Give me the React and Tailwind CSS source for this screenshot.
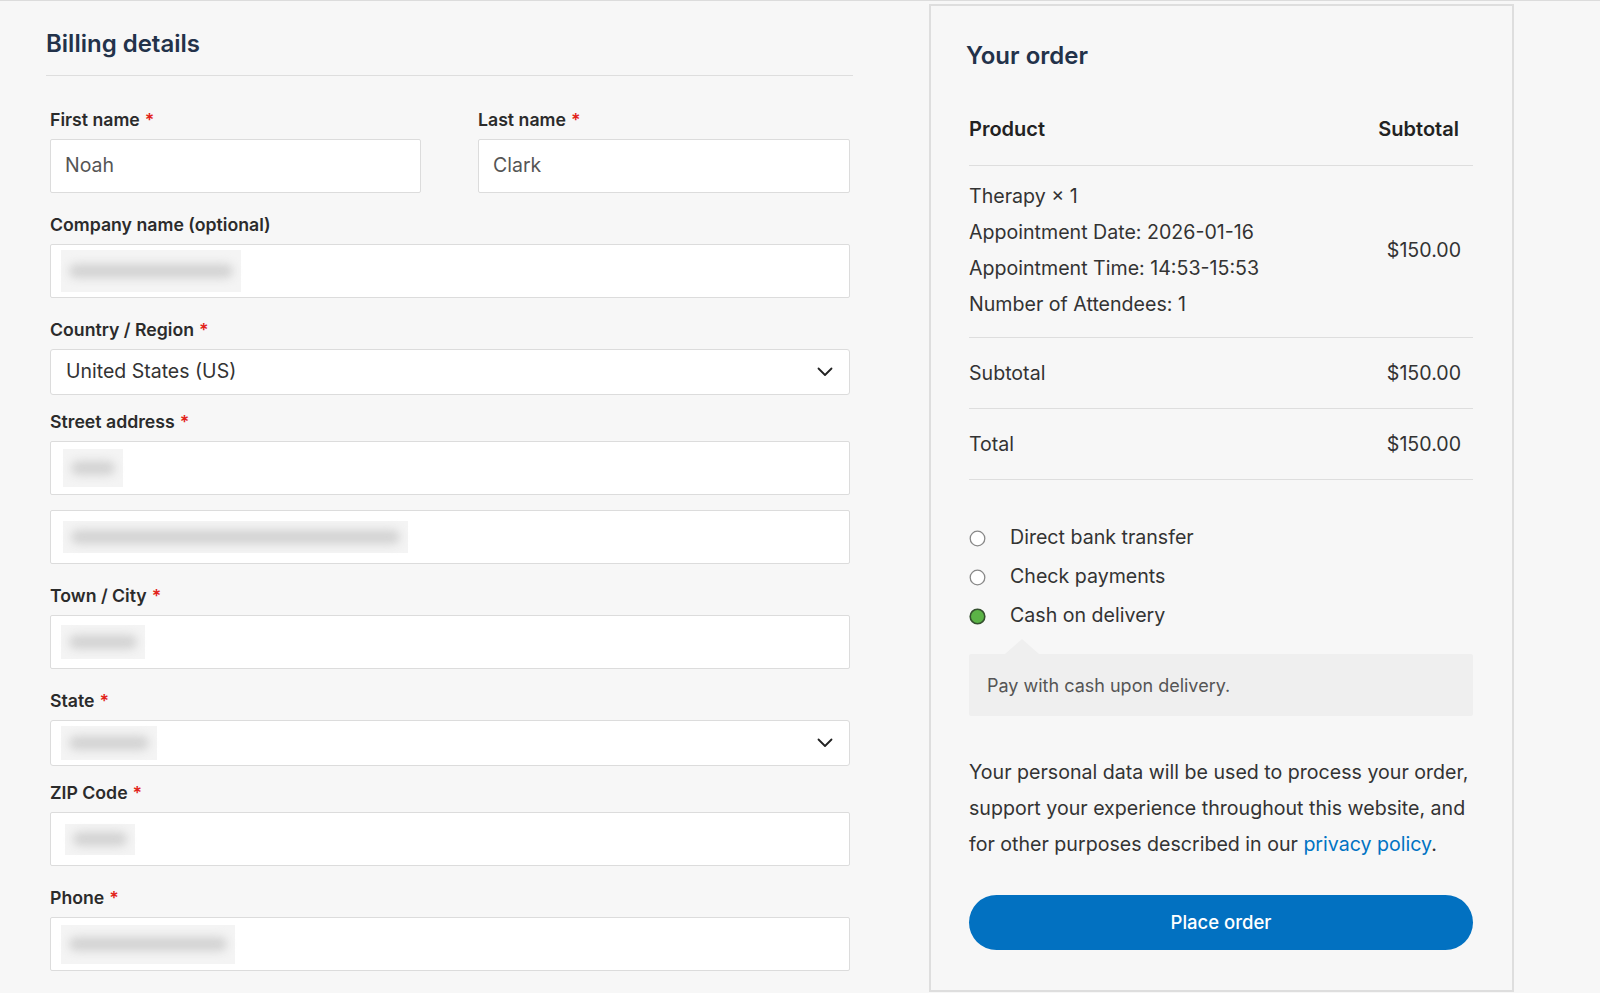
import React from 'react';

// Checkout page - billing form on the left, order summary on the right

const ChevronDown = () => (
  <svg width="16" height="10" viewBox="0 0 16 10" fill="none">
    <path d="M1.5 1.5l6.5 6.5 6.5-6.5" stroke="#222" strokeWidth="1.8" strokeLinecap="round" strokeLinejoin="round" />
  </svg>
);

// blurred placeholder standing in for hidden personal data
const Blur = ({ w, h = 34 }) => (
  <div className="bg-[#f4f4f4] flex items-center px-[8px]" style={{ width: w, height: h }}>
    <div className="h-[14px] w-full rounded-full bg-[#d2d2d2] blur-[5px]" />
  </div>
);

const Label = ({ children, required = true }) => (
  <div className="h-[24px] mb-[7px] text-[17.7px] leading-[24px] font-semibold text-[#2b2b2b]">
    {children}
    {required && <span className="text-[#e2231a] ml-[5px]">*</span>}
  </div>
);

const Input = ({ children }) => (
  <div className="h-[54px] bg-white border border-[#dcdcdc] rounded-[2px] flex items-center pl-[10px] text-[19.5px] text-[#555]">
    {children}
  </div>
);

const Select = ({ children }) => (
  <div className="h-[46px] bg-white border border-[#dcdcdc] rounded-[3px] flex items-center justify-between pl-[10px] pr-[16px] text-[19.5px] text-[#333]">
    <div className="flex items-center">{children}</div>
    <ChevronDown />
  </div>
);

const Radio = ({ checked }) =>
  checked ? (
    <svg width="17" height="17" viewBox="0 0 17 17">
      <circle cx="8.5" cy="8.5" r="7.3" fill="#5bb346" stroke="#34502e" strokeWidth="1.6" />
    </svg>
  ) : (
    <svg width="17" height="17" viewBox="0 0 17 17">
      <circle cx="8.5" cy="8.5" r="7.3" fill="#fff" stroke="#888" strokeWidth="1.3" />
    </svg>
  );

function BillingDetails() {
  return (
    <div className="w-[853px] pl-[46px] shrink-0">
      <h3 className="pt-[28px] pb-[16px] border-b border-[#dedede] text-[24px] leading-[30px] font-semibold text-[#23324a]">
        Billing details
      </h3>
      <div className="pl-[4px] pr-[3px] pt-[32px]">
        <div className="flex gap-[57px] mb-[20px]">
          <div className="w-[371px]">
            <Label>First name</Label>
            <Input><span className="pl-[4px]">Noah</span></Input>
          </div>
          <div className="flex-1">
            <Label>Last name</Label>
            <Input><span className="pl-[4px]">Clark</span></Input>
          </div>
        </div>

        <div className="mb-[20px]">
          <Label required={false}>Company name (optional)</Label>
          <Input><Blur w={180} h={42} /></Input>
        </div>

        <div className="mb-[15px]">
          <Label>Country / Region</Label>
          <Select><span className="pl-[5px]">United States (US)</span></Select>
        </div>

        <div className="mb-[20px]">
          <Label>Street address</Label>
          <Input><div className="pl-[2px]"><Blur w={60} h={38} /></div></Input>
          <div className="h-[15px]" />
          <Input><div className="pl-[2px]"><Blur w={345} h={32} /></div></Input>
        </div>

        <div className="mb-[20px]">
          <Label>Town / City</Label>
          <Input><Blur w={84} h={34} /></Input>
        </div>

        <div className="mb-[15px]">
          <Label>State</Label>
          <Select><Blur w={96} h={34} /></Select>
        </div>

        <div className="mb-[20px]">
          <Label>ZIP Code</Label>
          <Input><div className="pl-[4px]"><Blur w={70} h={31} /></div></Input>
        </div>

        <div>
          <Label>Phone</Label>
          <Input><Blur w={174} h={39} /></Input>
        </div>
      </div>
    </div>
  );
}

function OrderReview() {
  const details = [
    'Therapy × 1',
    'Appointment Date: 2026-01-16',
    'Appointment Time: 14:53-15:53',
    'Number of Attendees: 1',
  ];
  const methods = [
    { name: 'Direct bank transfer', checked: false },
    { name: 'Check payments', checked: false },
    { name: 'Cash on delivery', checked: true },
  ];

  return (
    <div className="ml-[76px] mt-[3px] w-[585px] shrink-0 border-2 border-[#dedede] pl-[38px] pr-[39px] pt-[35px] pb-[40px] text-[#333]">
      <h3 className="text-[24px] leading-[30px] font-semibold text-[#23324a] -ml-[3px]">Your order</h3>

      <div className="mt-[22px]">
        <div className="flex justify-between py-[24px] border-b border-[#dedede] text-[20px] leading-[24px] font-semibold text-[#222]">
          <span>Product</span>
          <span className="pr-[14px]">Subtotal</span>
        </div>
        <div className="flex justify-between items-center pt-[12px] pb-[15px] border-b border-[#dedede] text-[19.6px] leading-[36px]">
          <div>
            {details.map((d) => (
              <div key={d}>{d}</div>
            ))}
          </div>
          <span className="pr-[12px]">$150.00</span>
        </div>
        <div className="flex justify-between py-[23px] border-b border-[#dedede] text-[19.6px] leading-[24px]">
          <span>Subtotal</span>
          <span className="pr-[12px]">$150.00</span>
        </div>
        <div className="flex justify-between py-[23px] border-b border-[#dedede] text-[19.6px] leading-[24px]">
          <span>Total</span>
          <span className="pr-[12px]">$150.00</span>
        </div>
      </div>

      <div className="mt-[46px] flex flex-col gap-[15px]">
        {methods.map((m) => (
          <div key={m.name} className="flex items-center h-[24px] text-[19.6px] text-[#333]">
            <Radio checked={m.checked} />
            <span className="ml-[24px]">{m.name}</span>
          </div>
        ))}
      </div>

      <div className="relative mt-[26px] h-[62px] bg-[#efefef] rounded-[2px] flex items-center pl-[18px] text-[18px] text-[#555]">
        <div className="absolute left-[36px] -top-[15px] w-0 h-0 border-l-[17px] border-r-[17px] border-b-[15px] border-l-transparent border-r-transparent border-b-[#efefef]" />
        Pay with cash upon delivery.
      </div>

      <p className="mt-[38px] text-[19.6px] leading-[36px] text-[#333] whitespace-nowrap">
        Your personal data will be used to process your order,
        <br />
        support your experience throughout this website, and
        <br />
        for other purposes described in our{' '}
        <a className="text-[#0073c3]" href="#">privacy policy</a>.
      </p>

      <button className="mt-[33px] w-full h-[55px] rounded-full bg-[#0271c1] text-white text-[18.5px] font-medium">
        Place order
      </button>
    </div>
  );
}

export default function App() {
  return (
    <div
      className="min-h-screen bg-[#f7f7f7] border-t border-[#dcdcdc] flex items-start"
      style={{ fontFamily: 'Inter, "Liberation Sans", sans-serif' }}
    >
      <BillingDetails />
      <OrderReview />
    </div>
  );
}
